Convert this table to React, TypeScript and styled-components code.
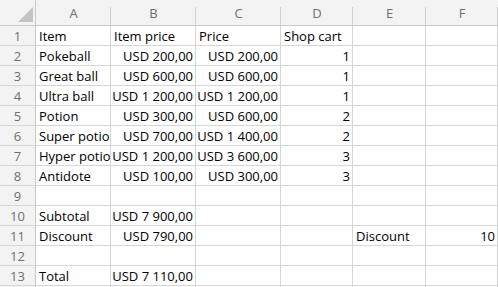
import React from "react";
import styled, { createGlobalStyle } from "styled-components";

const GlobalStyle = createGlobalStyle`
  html, body {
    margin: 0;
    padding: 0;
    background: #ffffff;
  }
  body {
    font-family: "Open Sans", "Noto Sans", sans-serif;
    overflow: hidden;
  }
`;

const columns = ["A", "B", "C", "D", "E", "F"];

type Align = "left" | "right";
type CellData = { text: string; align?: Align };

const money = (v: string): CellData => ({ text: `USD ${v}`, align: "right" });
const num = (v: string): CellData => ({ text: v, align: "right" });
const txt = (v: string): CellData => ({ text: v });

const rows: (CellData | null)[][] = [
  [txt("Item"), txt("Item price"), txt("Price"), txt("Shop cart"), null, null],
  [txt("Pokeball"), money("200,00"), money("200,00"), num("1"), null, null],
  [txt("Great ball"), money("600,00"), money("600,00"), num("1"), null, null],
  [txt("Ultra ball"), money("1 200,00"), money("1 200,00"), num("1"), null, null],
  [txt("Potion"), money("300,00"), money("600,00"), num("2"), null, null],
  [txt("Super potion"), money("700,00"), money("1 400,00"), num("2"), null, null],
  [txt("Hyper potion"), money("1 200,00"), money("3 600,00"), num("3"), null, null],
  [txt("Antidote"), money("100,00"), money("300,00"), num("3"), null, null],
  [null, null, null, null, null, null],
  [txt("Subtotal"), money("7 900,00"), null, null, null, null],
  [txt("Discount"), money("790,00"), null, null, txt("Discount"), num("10")],
  [null, null, null, null, null, null],
  [txt("Total"), money("7 110,00"), null, null, null, null],
];

const Sheet = styled.div`
  display: grid;
  grid-template-columns: 36px 75px 85px 85px 72px 73px 72px;
  grid-template-rows: 26px;
  grid-auto-rows: 20px;
  width: 498px;
  height: 287px;
  overflow: hidden;
`;

const Corner = styled.div`
  position: relative;
  background: #f3f3f3;
  border-right: 1px solid #c9c9c9;
  border-bottom: 1px solid #c9c9c9;
  box-sizing: border-box;

  svg {
    position: absolute;
    right: 2px;
    bottom: 3px;
  }
`;

const ColumnHeader = styled.div`
  box-sizing: border-box;
  background:
    linear-gradient(#d0d0d0, #d0d0d0) right bottom / 1px 18px no-repeat,
    #f3f3f3;
  border-bottom: 1px solid #c9c9c9;
  color: #6f6f6f;
  font-size: 13px;
  display: flex;
  align-items: center;
  justify-content: center;
  padding-top: 1px;
`;

const RowHeader = styled.div`
  box-sizing: border-box;
  background: #f3f3f3;
  border-right: 1px solid #c9c9c9;
  border-bottom: 1px solid #d6d6d6;
  color: #6f6f6f;
  font-size: 13px;
  display: flex;
  align-items: center;
  justify-content: center;
`;

const Cell = styled.div<{ $align: Align }>`
  box-sizing: border-box;
  border-right: 1px solid #d6d6d6;
  border-bottom: 1px solid #d6d6d6;
  color: #000000;
  font-size: 13px;
  white-space: nowrap;
  overflow: hidden;
  display: flex;
  align-items: center;
  justify-content: ${(p) => (p.$align === "right" ? "flex-end" : "flex-start")};
  padding: 0 2px 0 3px;
`;

export default function App() {
  return (
    <>
      <GlobalStyle />
      <Sheet>
        <Corner>
          <svg width="15" height="15" viewBox="0 0 15 15">
            <polygon points="15,0 15,15 0,15" fill="#c4c4c4" />
          </svg>
        </Corner>
        {columns.map((c) => (
          <ColumnHeader key={c}>{c}</ColumnHeader>
        ))}
        {rows.map((row, r) => (
          <React.Fragment key={r}>
            <RowHeader>{r + 1}</RowHeader>
            {row.map((cell, c) => (
              <Cell key={c} $align={cell?.align ?? "left"}>
                {cell?.text ?? ""}
              </Cell>
            ))}
          </React.Fragment>
        ))}
        {/* partly visible row below the last numbered one */}
        <RowHeader />
        {columns.map((c) => (
          <Cell key={`tail-${c}`} $align="left" />
        ))}
      </Sheet>
    </>
  );
}
